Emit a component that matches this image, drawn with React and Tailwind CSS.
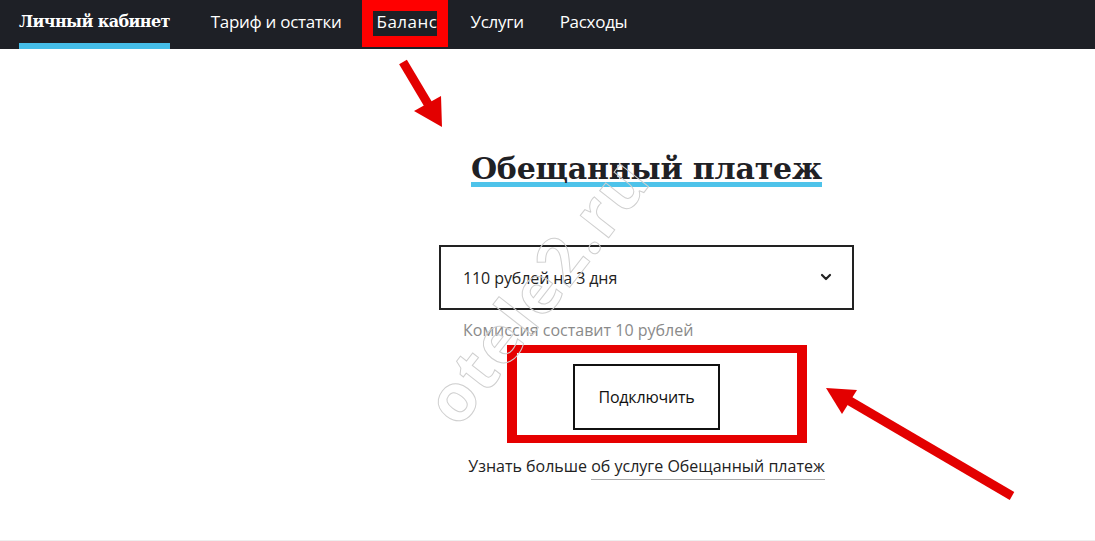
import React from "react";

const sans = "font-['Open_Sans','Liberation_Sans',sans-serif]";
const serif = "font-['DejaVu_Serif','Liberation_Serif',serif]";

function NavItem({ children, className = "" }) {
  return (
    <div className={`relative flex h-full items-center pb-[5px] text-[17px] tracking-[-0.3px] text-white ${sans} ${className}`}>
      {children}
    </div>
  );
}

export default function App() {
  return (
    <div className="relative h-[541px] w-[1095px] overflow-hidden bg-white">
      {/* top nav */}
      <nav className="flex h-[49px] items-stretch bg-[#1e2026] pl-[19px]">
        <div className={`relative flex h-full items-center pb-[5px] text-[16px] font-bold tracking-[-0.6px] text-white ${serif}`}>
          Личный кабинет
          <div className="absolute bottom-0 left-0 right-0 h-[6px] bg-[#45bde8]" />
        </div>
        <NavItem className="ml-[41px]">Тариф и остатки</NavItem>
        <NavItem className="ml-[35px] tracking-[0.5px]">
          Баланс
          <div className="pointer-events-none absolute bottom-[2px] left-[-15px] right-[-11px] top-0 border-[11px] border-[#ff0000]" />
        </NavItem>
        <NavItem className="ml-[33px]">Услуги</NavItem>
        <NavItem className="ml-[36px]">Расходы</NavItem>
      </nav>

      {/* body */}
      <div className="flex">
        <div className="w-[198px] shrink-0" />
        <div className="flex flex-1 flex-col items-center">
          <h1 className={`mt-[103px] text-[30px] font-bold leading-[34px] tracking-[-0.2px] text-[#1f2125] ${serif}`}>
            <span className="bg-[linear-gradient(#4ec3ea,#4ec3ea)] bg-[length:100%_5px] bg-bottom bg-no-repeat pb-[1px]">
              Обещанный платеж
            </span>
          </h1>

          <div className={`mt-[59px] flex h-[65px] w-[415px] items-center justify-between border-2 border-[#222] pl-[22px] pr-[20px] text-[16px] text-[#222] ${sans}`}>
            <span className="tracking-[-0.1px]">110 рублей на 3 дня</span>
            <svg width="12" height="8" viewBox="0 0 12 8" className="mb-[2px]">
              <path d="M2 2 L6 6 L10 2" fill="none" stroke="#222" strokeWidth="2.2" strokeLinecap="round" strokeLinejoin="round" />
            </svg>
          </div>

          <div className={`mt-[8px] w-[415px] pl-[24px] text-[16px] text-[#8a8a8a] ${sans}`}>
            Комиссия составит 10 рублей
          </div>

          <div className="relative mt-[22px]">
            <div className={`flex h-[66px] w-[147px] items-center justify-center border-2 border-[#111] text-[16px] tracking-[-0.2px] text-[#111] ${sans}`}>
              Подключить
            </div>
            <div className="pointer-events-none absolute left-[-66px] top-[-19px] h-[98px] w-[300px] border-x-[10px] border-y-[8px] border-[#e60000]" />
          </div>

          <div className={`mt-[24px] text-[16px] text-[#222] ${sans}`}>
            Узнать больше{" "}
            <span className="border-b border-[#aaa] pb-[2px]">об услуге Обещанный платеж</span>
          </div>
        </div>
      </div>

      {/* bottom line */}
      <div className="absolute bottom-0 left-0 right-0 h-[1px] bg-[#eeeeee]" />

      {/* watermark */}
      <div
        className={`pointer-events-none absolute left-[378px] top-[240px] origin-center -rotate-[52deg] text-[66px] font-bold tracking-[2px] text-transparent [-webkit-text-stroke:1px_#cfcfcf] ${sans}`}
      >
        otele2.ru
      </div>

      {/* arrows */}
      <svg className="pointer-events-none absolute left-0 top-0" width="1095" height="541">
        <line x1="403" y1="62" x2="428" y2="104" stroke="#e30000" strokeWidth="9" strokeLinecap="butt" />
        <polygon points="414,111 441,96 442,127" fill="#e30000" />
        <line x1="1012" y1="496" x2="848" y2="400" stroke="#e30000" strokeWidth="9" />
        <polygon points="826,388 857,390 842,414" fill="#e30000" />
      </svg>
    </div>
  );
}
